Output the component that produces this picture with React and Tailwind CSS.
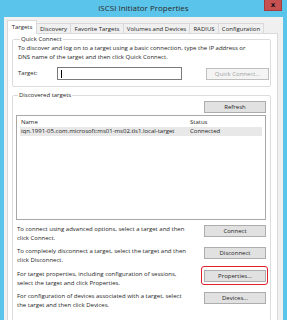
export default function App() {
  const f = { fontFamily: '"Open Sans", "Noto Sans", sans-serif' };
  const btn =
    "h-[12px] w-[62px] border border-[#adadad] bg-[#e1e1e1] text-[6px] leading-none text-[#1e1e1e] flex items-center justify-center";
  return (
    <div className="w-[287px] h-[320px] bg-[#5bc4ea] flex flex-col overflow-hidden" style={f}>
      {/* title bar */}
      <div className="h-[17px] shrink-0 relative flex items-center justify-center">
        <span className="text-[8px] text-[#2b2b2b] leading-none mt-[-1px]">iSCSI Initiator Properties</span>
        <div className="absolute right-[5px] top-0 w-[18px] h-[11px] bg-[#c75050] border border-[#a53c3c] border-t-0 flex items-center justify-center">
          <span className="text-[7px] font-bold leading-none text-[#111]" style={{ fontFamily: '"DejaVu Sans", sans-serif' }}>x</span>
        </div>
      </div>
      {/* window body */}
      <div className="flex-1 mx-[4px] bg-[#f0f0f0] pl-[3px] pr-[5px] pt-[3px] flex flex-col text-[#1e1e1e]">
        {/* tabs */}
        <div className="flex items-end h-[14px] relative z-10 text-[6px] leading-none">
          <div className="h-[14px] w-[30px] bg-white border border-[#d9d9d9] border-b-0 flex items-center justify-center pb-[1px]">Targets</div>
          <div className="h-[11px] w-[34px] bg-[#f0f0f0] border border-[#d9d9d9] border-l-0 flex items-center justify-center">Discovery</div>
          <div className="h-[11px] w-[53px] bg-[#f0f0f0] border border-[#d9d9d9] border-l-0 flex items-center justify-center">Favorite Targets</div>
          <div className="h-[11px] w-[66px] bg-[#f0f0f0] border border-[#d9d9d9] border-l-0 flex items-center justify-center">Volumes and Devices</div>
          <div className="h-[11px] w-[29px] bg-[#f0f0f0] border border-[#d9d9d9] border-l-0 flex items-center justify-center">RADIUS</div>
          <div className="h-[11px] w-[45px] bg-[#f0f0f0] border border-[#d9d9d9] border-l-0 flex items-center justify-center">Configuration</div>
        </div>
        {/* panel */}
        <div className="flex-1 bg-white border border-[#d9d9d9] -mt-[1px] pl-[4px] pr-[6px] pt-[1px] text-[6px] leading-[9px]">
          <fieldset className="border border-[#dcdcdc] rounded-[2px] pl-[5px] pr-[1px] pb-[3px] h-[52px]">
            <legend className="ml-[2px] px-[1px] leading-[8px]">Quick Connect</legend>
            <div className="mt-[1px] w-[240px]">
              To discover and log on to a target using a basic connection, type the IP address or DNS name of the target and then click Quick Connect.
            </div>
            <div className="flex items-center mt-[5px]">
              <span className="w-[39px]">Target:</span>
              <div className="w-[125px] h-[13px] border border-[#7a7a7a] bg-white flex items-center pl-[3px]">
                <div className="w-px h-[8px] bg-black"></div>
              </div>
              <div className="ml-auto h-[12px] w-[63px] border border-[#bfbfbf] bg-[#f4f4f4] text-[#a0a0a0] flex items-center justify-center leading-none">Quick Connect...</div>
            </div>
          </fieldset>
          <fieldset className="border border-[#dcdcdc] rounded-[2px] mt-[4px] pl-[3px] pr-[4px] h-[240px]">
            <legend className="ml-[2px] px-[1px] leading-[8px]">Discovered targets</legend>
            <div className="flex justify-end mt-[2px]">
              <div className={btn}>Refresh</div>
            </div>
            <div className="mt-[2px] h-[105px] border border-[#a8a8a8] bg-white px-[3px] pt-[1px]">
              <div className="flex h-[10px] items-center">
                <span className="w-[170px] pl-[1px]">Name</span>
                <span>Status</span>
              </div>
              <div className="flex h-[9px] items-center bg-[#e8e8e8]">
                <span className="w-[170px] pl-[1px]">iqn.1991-05.com.microsoft:ms01-ms02.tls1.local-target</span>
                <span>Connected</span>
              </div>
            </div>
            <div className="flex items-start mt-[5px]">
              <div className="w-[172px] pl-[1px]">To connect using advanced options, select a target and then click Connect.</div>
              <div className={"ml-auto " + btn}>Connect</div>
            </div>
            <div className="flex items-start mt-[4px]">
              <div className="w-[172px] pl-[1px]">To completely disconnect a target, select the target and then click Disconnect.</div>
              <div className={"ml-auto " + btn}>Disconnect</div>
            </div>
            <div className="flex items-start mt-[5px]">
              <div className="w-[172px] pl-[1px]">For target properties, including configuration of sessions, select the target and click Properties.</div>
              <div className="ml-auto relative">
                <div className={btn}>Properties...</div>
                <div className="absolute -left-[3px] -right-[2px] -top-[4px] -bottom-[3px] border border-[#e0202a] rounded-[3px]"></div>
              </div>
            </div>
            <div className="flex items-start mt-[4px]">
              <div className="w-[172px] pl-[1px]">For configuration of devices associated with a target, select the target and then click Devices.</div>
              <div className={"ml-auto " + btn}>Devices...</div>
            </div>
          </fieldset>
        </div>
      </div>
    </div>
  );
}
